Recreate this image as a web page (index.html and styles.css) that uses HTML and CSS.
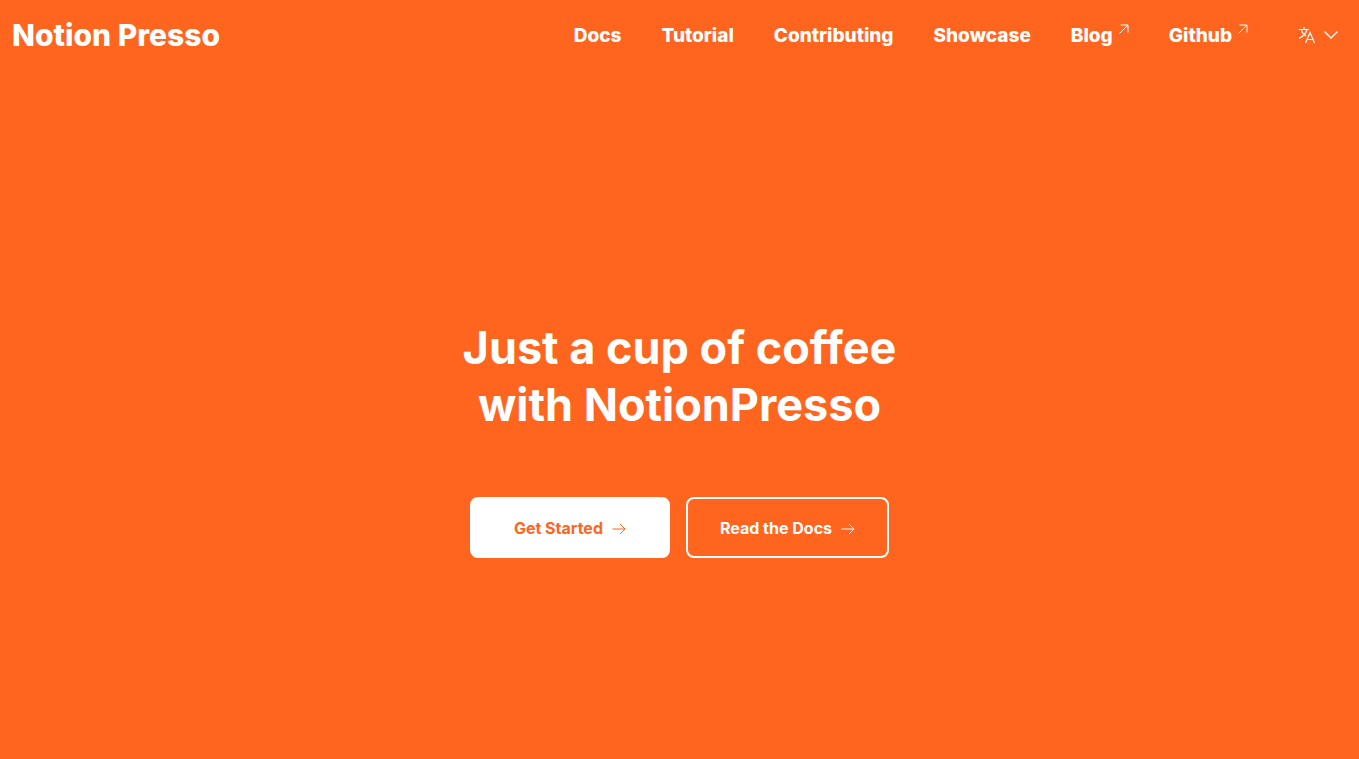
FILE: index.html
```html
<!DOCTYPE html>
<html lang="en">
  <head>
    <meta charset="utf-8" />
    <title>Notion Presso</title>
    <meta name="viewport" content="width=device-width, initial-scale=1" />
    <link rel="stylesheet" href="styles.css">
  </head>
  <body>
    <header class="header">
      <a class="logo" href="#">Notion Presso</a>
      <nav class="nav">
        <a class="nav-link" href="#">Docs</a>
        <a class="nav-link" href="#">Tutorial</a>
        <a class="nav-link" href="#">Contributing</a>
        <a class="nav-link" href="#">Showcase</a>
        <a class="nav-link" href="#">Blog
          <svg class="external" viewBox="0 0 10 10" aria-hidden="true">
            <path d="M0.5 9.5L9 1M1.5 1H9V8.5" />
          </svg>
        </a>
        <a class="nav-link" href="#">Github
          <svg class="external" viewBox="0 0 10 10" aria-hidden="true">
            <path d="M0.5 9.5L9 1M1.5 1H9V8.5" />
          </svg>
        </a>
        <button class="language" type="button" aria-label="Language">
          <svg class="translate" viewBox="0 0 18 18" aria-hidden="true">
            <path d="M0.5 3.5H11M6 1V3.5M9 3.5C8 7.5 5 10.5 1 12.5M3 3.5C4 6.5 5.5 8.5 8 10M7.5 17L12 6.5L16.5 17M9 13.5H15" />
          </svg>
          <svg class="chevron" viewBox="0 0 14 8" aria-hidden="true">
            <path d="M0.5 0.5L7 7L13.5 0.5" />
          </svg>
        </button>
      </nav>
    </header>

    <main class="hero">
      <h1 class="title">Just a cup of coffee<br />with NotionPresso</h1>
      <div class="actions">
        <a class="button button-primary" href="#">Get Started
          <svg class="arrow" viewBox="0 0 14 12" aria-hidden="true">
            <path d="M0.5 6H13M8 1L13 6L8 11" />
          </svg>
        </a>
        <a class="button button-outline" href="#">Read the Docs
          <svg class="arrow" viewBox="0 0 14 12" aria-hidden="true">
            <path d="M0.5 6H13M8 1L13 6L8 11" />
          </svg>
        </a>
      </div>
    </main>
  </body>
</html>
```

FILE: styles.css
```css
* {
  box-sizing: border-box;
}

body {
  margin: 0;
  min-height: 100vh;
  display: flex;
  flex-direction: column;
  background-color: #ff651e;
  color: white;
  font-family: Inter, "Liberation Sans", sans-serif;
  font-weight: 800;
  font-variant-ligatures: none;
}

a {
  color: inherit;
  text-decoration: none;
}

svg {
  flex: none;
  fill: none;
  stroke: currentColor;
}

.header {
  display: flex;
  justify-content: space-between;
  align-items: center;
  height: 70px;
  padding: 0 21px 0 12px;
}

.logo {
  font-size: 30px;
}

.nav {
  display: flex;
  align-items: center;
  gap: 40px;
  font-size: 19px;
}

.nav-link {
  display: flex;
  gap: 6px;
}

.external {
  width: 10px;
  height: 10px;
}

.language {
  display: flex;
  align-items: center;
  gap: 8px;
  margin-left: 10px;
  padding: 0;
  border: 0;
  background: none;
  color: inherit;
  cursor: pointer;
}

.translate {
  width: 18px;
  height: 18px;
  stroke-width: 1.2;
}

.chevron {
  width: 14px;
  height: 8px;
  stroke-width: 1.4;
}

.hero {
  flex: 1;
  display: flex;
  flex-direction: column;
  justify-content: center;
  align-items: center;
  padding: 48px 0 0;
}

.title {
  margin: 0 0 64px;
  font-size: 45px;
  font-weight: 700;
  line-height: 57px;
  text-align: center;
}

.actions {
  display: flex;
  gap: 16px;
  font-size: 16px;
  font-weight: 700;
}

.button {
  display: flex;
  justify-content: center;
  align-items: center;
  gap: 9px;
  min-width: 200px;
  height: 61px;
  padding: 0 32px;
  border: 2px solid white;
  border-radius: 8px;
}

.button-primary {
  background-color: white;
  color: #ff651e;
}

.arrow {
  width: 14px;
  height: 12px;
  margin-top: 2px;
}
```
